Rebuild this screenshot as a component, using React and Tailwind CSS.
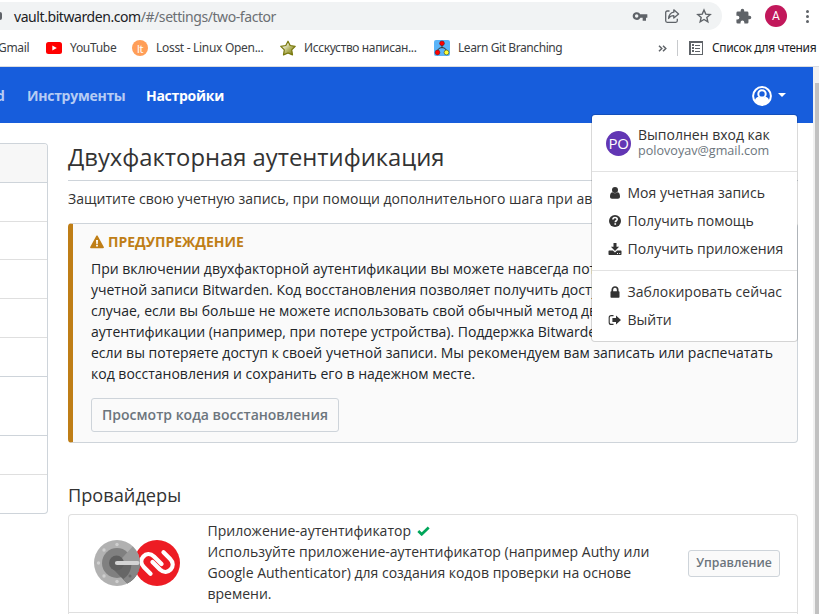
import React from "react";

const SANS = "font-['Open_Sans','Noto_Sans',sans-serif]";
const CHROME = "font-['Noto_Sans','Open_Sans',sans-serif]";

/* Toolbar glyphs */
function KeyIcon() {
  return (
    <svg viewBox="0 0 24 24" className="size-4" fill="#5f6368">
      <path d="M12.65 9.6A6.2 6.2 0 0 0 1 12a6.2 6.2 0 0 0 11.65 2.6H16V19h5v-4.4h2V9.4H12.65zM7 14.6a2.6 2.6 0 1 1 0-5.2 2.6 2.6 0 0 1 0 5.2z" />
    </svg>
  );
}

function ShareIcon() {
  return (
    <svg viewBox="0 0 16 16" className="size-4" fill="none" stroke="#5f6368" strokeWidth="1.3" strokeLinejoin="round">
      <path d="M5.5 3H3.2C2.3 3 1.7 3.6 1.7 4.5v8.3c0 .9.6 1.5 1.5 1.5h8.6c.9 0 1.5-.6 1.5-1.5v-2" />
      <path d="M9.8 1.8 14.6 6l-4.8 4.1V7.7C7.500 7.700 5.800 8.500 4.600 10.500 4.900 7.200 6.700 4.700 9.800 4.200z" />
    </svg>
  );
}

function StarIcon() {
  return (
    <svg viewBox="0 0 16 16" className="size-4" fill="none" stroke="#5f6368" strokeWidth="1.4" strokeLinejoin="miter">
      <path d="m8 2 1.75 4.1 4.45.4-3.370 2.920 1 4.380L8 11.500 4.170 13.800l1-4.380L1.800 6.500l4.450-.4z" />
    </svg>
  );
}

function PuzzleIcon() {
  return (
    <svg viewBox="0 0 24 24" className="size-[17px]" fill="#5f6368">
      <path d="M20.500 11H19V7a2 2 0 0 0-2-2h-4V3.500a2.500 2.500 0 0 0-5 0V5H4a2 2 0 0 0-2 2v3.800h1.500a2.700 2.700 0 0 1 0 5.400H2V20a2 2 0 0 0 2 2h3.800v-1.500a2.700 2.700 0 0 1 5.400 0V22H17a2 2 0 0 0 2-2v-4h1.500a2.500 2.500 0 0 0 0-5z" />
    </svg>
  );
}

function YouTubeIcon() {
  return (
    <svg viewBox="0 0 16 12" className="h-3 w-4">
      <rect width="16" height="12" rx="2.500" fill="#f00" />
      <path d="M6.300 3.400v5.200L10.800 6z" fill="#fff" />
    </svg>
  );
}

function GoldStar() {
  return (
    <svg viewBox="0 0 16 16" className="size-4">
      <defs>
        <linearGradient id="gold" x1="0" y1="0" x2="1" y2="1">
          <stop offset="0.150" stopColor="#fff" />
          <stop offset="0.550" stopColor="#b9b96a" />
          <stop offset="1" stopColor="#6b6b00" />
        </linearGradient>
      </defs>
      <path d="m8 1.200 2.200 4.300 5 .8-3.500 3.600.8 5L8 13l-4.500 1.900.8-5L.8 6.300l5-.8z" fill="url(#gold)" stroke="#77770a" strokeWidth="1.200" strokeLinejoin="round" />
    </svg>
  );
}

function GitTreeIcon() {
  return (
    <svg viewBox="0 0 16 16" className="size-4">
      <rect width="16" height="16" rx="2" fill="#5ab4f8" />
      <path d="M8 4v4M3.500 12C3.500 9 5 7.800 8 7.600c3 .2 4.500 1.400 4.500 4.400" fill="none" stroke="#333" strokeWidth="1" />
      <circle cx="8" cy="3.300" r="2.400" fill="#f00" stroke="#611" strokeWidth=".5" />
      <circle cx="3.500" cy="12.500" r="2.400" fill="#f00" stroke="#611" strokeWidth=".5" />
      <circle cx="12.500" cy="12.500" r="2.400" fill="#ff3" stroke="#441" strokeWidth=".6" />
    </svg>
  );
}

function ReadingListIcon() {
  return (
    <svg viewBox="0 0 14 14" className="size-3.5" shapeRendering="crispEdges">
      <rect x=".75" y=".75" width="12.500" height="12.500" fill="none" stroke="#5f6368" strokeWidth="1.500" />
      <path d="M3 3h2v2H3zM3 6h2v2H3zM3 9h2v2H3zM6 3.500h5v1H6zM6 6.500h5v1H6zM6 9.500h5v1H6z" fill="#5f6368" />
    </svg>
  );
}

/* Menu glyphs on the Font Awesome 14px grid */
function UserIcon() {
  return (
    <svg viewBox="0 0 14 14" className="size-3.5" fill="currentColor">
      <path d="M12 10.800c0 1.200-.8 2-2 2H4c-1.200 0-2-.8-2-2 0-2.100.5-4.300 2.300-4.500.7.600 1.600 1 2.700 1s2-.4 2.700-1c1.800.2 2.300 2.400 2.300 4.500zM10 4a3 3 0 1 1-6 0 3 3 0 0 1 6 0z" />
    </svg>
  );
}

function HelpIcon() {
  return (
    <svg viewBox="0 0 14 14" className="size-3.5">
      <circle cx="7" cy="7" r="6" fill="currentColor" />
      <path d="M4.900 5.500C5 4.100 5.900 3.500 7 3.500c1.200 0 2.200.7 2.200 1.800 0 1.500-1.900 1.400-1.900 2.900" fill="none" stroke="#fff" strokeWidth="1.600" />
      <rect x="6.400" y="9.200" width="1.700" height="1.600" fill="#fff" />
    </svg>
  );
}

function DownloadIcon() {
  return (
    <svg viewBox="0 0 14 14" className="size-3.5" fill="currentColor">
      <path d="M5.500 1h3v3.800h2.600L7 8.900 2.900 4.800h2.600z" />
      <path fillRule="evenodd" d="M1.200 8.600h3.700L7 10.600l2.100-2h3.700c.4 0 .7.300.7.700v2.900c0 .4-.3.700-.7.700H1.200a.7.700 0 0 1-.7-.7V9.300c0-.4.300-.7.700-.7zM9 11.100v.9h1v-.9zM11.200 11.100v.9h1v-.9z" />
    </svg>
  );
}

function LockIcon() {
  return (
    <svg viewBox="0 0 14 14" className="size-3.5">
      <path d="M4.300 7V4.700a2.700 2.700 0 0 1 5.400 0V7" fill="none" stroke="currentColor" strokeWidth="1.700" />
      <rect x="2.500" y="6.200" width="9" height="6.500" rx=".8" fill="currentColor" />
    </svg>
  );
}

function SignOutIcon() {
  return (
    <svg viewBox="0 0 14 14" className="size-3.5">
      <path d="M5.500 2.600H3.200c-1.200 0-2 .8-2 2v4.800c0 1.200.8 2 2 2h2.300" fill="none" stroke="currentColor" strokeWidth="1.100" />
      <path d="M8 2.500 13 7l-5 4.500V8.900H4.400V5.100H8z" fill="currentColor" />
    </svg>
  );
}

function AccountIcon() {
  return (
    <svg viewBox="0 0 20 20" className="mt-0.5 size-5">
      <circle cx="10" cy="10" r="8.900" fill="none" stroke="#fff" strokeWidth="2" />
      <circle cx="10" cy="7.900" r="3.700" fill="none" stroke="#fff" strokeWidth="2" />
      <path d="M2.800 15c.4-2.800 1.700-4 3.700-4.300.9.800 2.100 1.400 3.500 1.400s2.600-.6 3.500-1.400c2 .3 3.300 1.500 3.700 4.300A8.800 8.800 0 0 1 10 19a8.800 8.800 0 0 1-7.200-4z" fill="#fff" />
    </svg>
  );
}

function WarningIcon() {
  return (
    <svg viewBox="0 0 14 14" className="size-3.5">
      <path d="M6.200 1c.3-.6 1.300-.6 1.600 0l6 11c.3.600-.1 1.200-.8 1.200H1c-.7 0-1.100-.6-.8-1.200z" fill="#bf7e16" />
      <path d="M6 5h2l-.3 4H6.300zM6.100 9.800h1.800v1.600H6.100z" fill="#fff" />
    </svg>
  );
}

function ProviderLogo() {
  return (
    <svg viewBox="0 0 86 46" className="h-[46px] w-[86px]">
      <circle cx="63" cy="23" r="23" fill="#ed1c24" />
      <g fill="none" stroke="#fff" strokeWidth="4.300" strokeLinecap="round">
        <path d="M56.500 33.700 50 27.200C42.500 19.700 52.500 9.500 60 16.500L67.500 24" />
        <path d="M69.500 12.300 76 18.800C83.500 26.300 73.500 36.500 66 29.500L58.500 22" />
      </g>
      <circle cx="23" cy="23" r="23" fill="#b1b1b1" />
      <circle cx="23" cy="23" r="15" fill="#808080" />
      <path d="M29.500 16.500 38.700 6.500A23 23 0 0 1 46 23H23z" fill="#999" />
      <path d="M17 27 33.300 43.500A23 23 0 0 0 46 23H23z" fill="#666" />
      <path d="M37.500 23H46a23 23 0 0 1-12.700 20.500L29 39.200C34.500 36 37.500 30 37.500 23z" fill="#858585" />
      <circle cx="22.500" cy="23" r="7.500" fill="#5f5f5f" />
      <path d="M23 23h20.500" stroke="#d4d4d4" strokeWidth="4.200" strokeLinecap="round" />
      <g fill="#cfcfcf">
        <circle cx="23" cy="4.500" r="1.700" />
        <circle cx="10" cy="10" r="1.700" />
        <circle cx="4.500" cy="23" r="1.700" />
        <circle cx="10" cy="36" r="1.700" />
        <circle cx="23" cy="41.500" r="1.700" />
        <circle cx="36" cy="36" r="1.500" fill="#6c6c6c" />
      </g>
    </svg>
  );
}

function BrowserBar() {
  return (
    <div className={`${CHROME} h-[67px] border-b border-[#dadce0] bg-white text-[#3c4043]`}>
      <div className="flex h-[30px] items-start pt-0.5">
        <div className="flex h-7 w-[722px] items-center rounded-r-full bg-[#f1f3f4]">
          <span className="mb-px h-2 w-0.5 rounded-r-sm bg-[#5f6368]" />
          <span className="ml-3 grow whitespace-nowrap text-[14px] tracking-[-0.43px] text-[#202124]">
            vault.bitwarden.com<span className="text-[#6b6f73]">/#/settings/two-factor</span>
          </span>
          <span className="mr-[10px] flex gap-4">
            <KeyIcon />
            <ShareIcon />
            <StarIcon />
          </span>
        </div>
        <div className="flex h-7 items-center pl-[13px]">
          <PuzzleIcon />
          <span className="ml-[13px] flex size-[22px] items-center justify-center rounded-full bg-[#c2185b] font-['Roboto',sans-serif] text-[12px] text-white">
            A
          </span>
          <span className="ml-[19px] flex flex-col gap-[2px]">
            <i className="size-[3px] rounded-full bg-[#5f6368]" />
            <i className="size-[3px] rounded-full bg-[#5f6368]" />
            <i className="size-[3px] rounded-full bg-[#5f6368]" />
          </span>
        </div>
      </div>
      <div className="flex h-9 items-center whitespace-nowrap text-[12px] tracking-[-0.3px]">
        <span className="-ml-0.5 w-12">Gmail</span>
        <YouTubeIcon />
        <span className="ml-2 w-[62px]">YouTube</span>
        <span className="flex size-4 items-center justify-center rounded-full bg-[#ff9e58] text-[11px] leading-none text-white">lt</span>
        <span className="ml-2 w-[124px]">Losst - Linux Open...</span>
        <GoldStar />
        <span className="ml-2 w-[130px] tracking-[-0.36px]">Исскуство написан...</span>
        <GitTreeIcon />
        <span className="ml-2 grow tracking-[-0.42px]">Learn Git Branching</span>
        <svg viewBox="0 0 9 7" className="h-[7px] w-[9px]" fill="none" stroke="#5f6368" strokeWidth="1.500">
          <path d="m1 .7 2.800 2.800L1 6.300M5 .7l2.800 2.800L5 6.300" />
        </svg>
        <span className="ml-[10px] mr-[11px] h-4 w-px bg-[#c8cacd]" />
        <ReadingListIcon />
        <span className="ml-[9px] w-[107px] tracking-[-0.36px] text-[#202124]">Список для чтения</span>
      </div>
    </div>
  );
}

function MenuItem({ icon, children }) {
  return (
    <div className="flex h-7 items-center whitespace-nowrap pl-[15.5px]">
      <span className="mt-px">{icon}</span>
      <span className="ml-1.5">{children}</span>
    </div>
  );
}

function AccountMenu() {
  return (
    <div className="absolute left-[591px] top-[47px] z-10 w-[207px] rounded border border-black/15 bg-white bg-clip-padding text-[14px] leading-[21px] text-[#333]">
      <div className="flex h-14 items-center pl-3.5">
        <span className="flex size-[25px] items-center justify-center rounded-full bg-[#6236b4] text-[15px] tracking-tight text-white">PO</span>
        <div className="-mt-px ml-[7px] whitespace-nowrap leading-[17px]">
          <div>Выполнен вход как</div>
          <div className="text-[12.6px] leading-4 text-[#6c757d]">polovoyav@gmail.com</div>
        </div>
      </div>
      <div className="border-t border-[#e2e2e2] pb-2 pt-1.5">
        <MenuItem icon={<UserIcon />}>Моя учетная запись</MenuItem>
        <MenuItem icon={<HelpIcon />}>Получить помощь</MenuItem>
        <MenuItem icon={<DownloadIcon />}>Получить приложения</MenuItem>
      </div>
      <div className="border-t border-[#e2e2e2] pb-2 pt-1.5">
        <MenuItem icon={<LockIcon />}>Заблокировать сейчас</MenuItem>
        <MenuItem icon={<SignOutIcon />}>Выйти</MenuItem>
      </div>
    </div>
  );
}

function Sidebar() {
  return (
    <div className="w-12 overflow-hidden rounded-tr rounded-br border-y border-r border-[#ced4da] self-start">
      <div className="h-[39px] border-b border-[#ced4da] bg-[#f7f7f7]" />
      <div className="h-[39px] border-b border-[#dfdfdf]" />
      <div className="h-[38px] border-b border-[#dfdfdf]" />
      <div className="h-[39px] border-b border-[#dfdfdf]" />
      <div className="h-[39px] border-b border-[#dfdfdf]" />
      <div className="h-[39px] border-b border-[#ced4da]" />
      <div className="h-[59px] border-b border-[#ced4da]" />
      <div className="h-[39px] border-b border-[#dfdfdf]" />
      <div className="h-[38px]" />
    </div>
  );
}

export default function App() {
  return (
    <div className="h-[614px] w-[819px] overflow-hidden bg-white">
      <BrowserBar />
      <div className={`${SANS} flex h-[547px] text-[14px] leading-[21px] text-[#333]`}>
        <div className="relative w-[813px]">
          <header className="flex h-14 items-center whitespace-nowrap bg-[#175ddc] font-bold text-white">
            <span className="-ml-1 w-[31px] text-white/70">d</span>
            <span className="w-[119px] tracking-[-0.28px] text-white/70">Инструменты</span>
            <span className="grow tracking-[-0.28px]">Настройки</span>
            <AccountIcon />
            <span className="ml-1.5 mr-[27px] border-x-[4px] border-t-[4px] border-x-transparent border-t-white" />
          </header>
          <AccountMenu />
          <div className="flex gap-5 pt-5">
            <Sidebar />
            <main className="w-[730px]">
              <div className="h-[38px] border-b border-[#ced4da]">
                <h1 className="whitespace-nowrap text-[23.8px] leading-7">Двухфакторная аутентификация</h1>
              </div>
              <p className="mt-[7px] whitespace-nowrap">Защитите свою учетную запись, при помощи дополнительного шага при авторизации.</p>
              <section className="mt-[14px] h-[220px] rounded-sm border border-l-[5px] border-[#ced4da] border-l-[#bf7e16] bg-[#fafafa] pl-[18px] pt-[7px]">
                <h3 className="-ml-px flex items-center font-bold uppercase text-[#bf7e16]">
                  <WarningIcon />
                  <span className="ml-1">Предупреждение</span>
                </h3>
                <p className="mt-[6px] whitespace-nowrap text-[#212529]">
                  При включении двухфакторной аутентификации вы можете навсегда потерять доступ к<br />
                  учетной записи Bitwarden. Код восстановления позволяет получить доступ к ней в<br />
                  случае, если вы больше не можете использовать свой обычный метод двухэтапной<br />
                  аутентификации (например, при потере устройства). Поддержка Bitwarden не поможет,<br />
                  если вы потеряете доступ к своей учетной записи. Мы рекомендуем вам записать или распечатать<br />
                  код восстановления и сохранить его в надежном месте.
                </p>
                <button className="mt-[14px] flex h-[34px] w-[248px] items-center justify-center whitespace-nowrap rounded-[3px] border border-[#ced4da] bg-[#fafafa] pb-0.5 font-semibold text-[#6c757d]">
                  Просмотр кода восстановления
                </button>
              </section>
              <h2 className="mt-10 text-[18.2px] leading-6">Провайдеры</h2>
              <div className="mt-[7px] h-[120px] rounded-t border border-b-0 border-[#dfdfdf]">
                <div className="flex h-[98px] items-center border-b border-[#dfdfdf]">
                  <div className="w-[138.5px] pb-0.5 pl-[25px]">
                    <ProviderLogo />
                  </div>
                  <div className="w-[480.5px] whitespace-nowrap pb-[3px]">
                    <div className="flex h-5 items-center">
                      Приложение-аутентификатор
                      <svg viewBox="0 0 13 10" className="ml-1.5 h-[10px] w-[13px]">
                        <path d="m1.300 5 3.400 3.300 7-6.800" fill="none" stroke="#00a65a" strokeWidth="2.700" />
                      </svg>
                    </div>
                    Используйте приложение-аутентификатор (например Authy или<br />
                    Google Authenticator) для создания кодов проверки на основе<br />
                    времени.
                  </div>
                  <button className="flex h-[27px] w-[92px] items-center justify-center rounded-[3px] border border-[#ced4da] bg-[#fafafa] pb-0.5 text-[12.25px] font-semibold text-[#6c757d]">
                    Управление
                  </button>
                </div>
              </div>
            </main>
          </div>
        </div>
        <div className="w-1.5 bg-[#f1f1f1] pl-0.5 pt-4">
          <div className="h-full bg-[#c1c1c1]" />
        </div>
      </div>
    </div>
  );
}
